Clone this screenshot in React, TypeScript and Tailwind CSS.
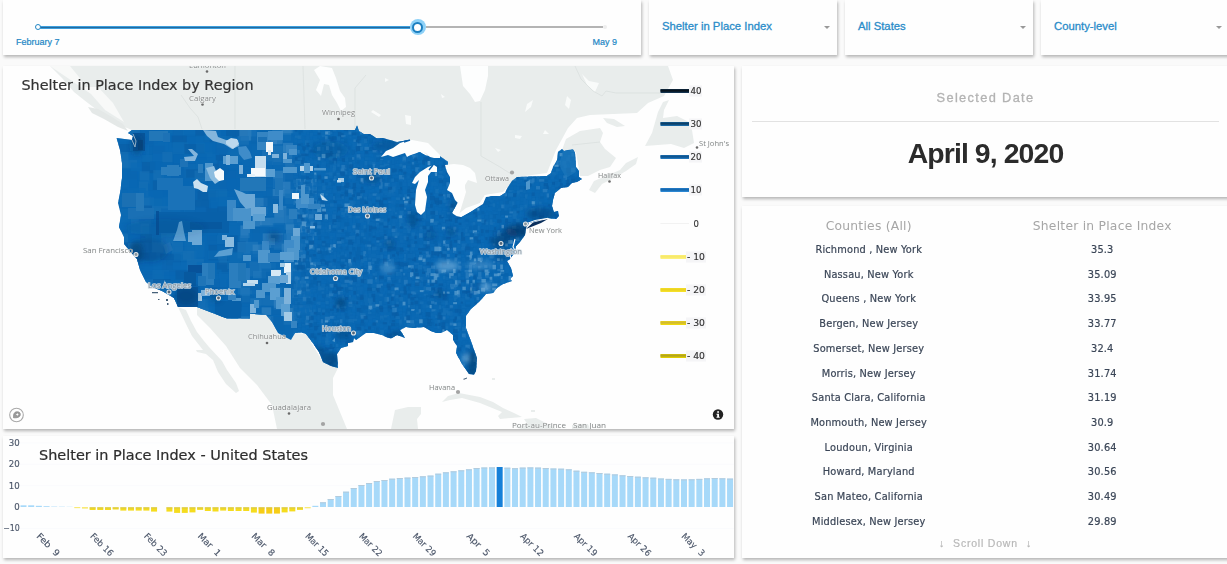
import React from "react";

const COUNTIES: [string, string][] = [
  ["Richmond , New York", "35.3"],
  ["Nassau, New York", "35.09"],
  ["Queens , New York", "33.95"],
  ["Bergen, New Jersey", "33.77"],
  ["Somerset, New Jersey", "32.4"],
  ["Morris, New Jersey", "31.74"],
  ["Santa Clara, California", "31.19"],
  ["Monmouth, New Jersey", "30.9"],
  ["Loudoun, Virginia", "30.64"],
  ["Howard, Maryland", "30.56"],
  ["San Mateo, California", "30.49"],
  ["Middlesex, New Jersey", "29.89"],
];

const US =
  "M132 130L355 130 357 125.5 359 131 364 134 370 134 376 138 383 138 390 140 397 142 408 140 408 156 420 152 425 155 432 157 438 155 444 159 448 162 448 166 445 168 450 172 453 181 448 190 454 188 458 202 452 213 456 216 459 215.5 461 217 470 212 483 203 485 197 492 196 500 196 505 193 508 187 512 181 517 177 547 176 551 173 553 167 557 160 558 152 562 149 564 151 568 150 573 149.5 575 153 576 167 579 171 579 177 582 179 577 182 572 183 568 187 561 188 555 193 553 200 552 206 554 212 558 211 559 216 556 219 548 218 543 219 529 223 526 228 525 235 520 242 516 246 515 252 510 259 507 261 511 268 513 276 510 279 512 281 503 284 497 288 493 293 486 294 480 301 471 309 466 316 466 328 472 344 477 358 476 371 474 374.5 469 374 462 364 456 353 457 346 453 340 453 335 447 330 441 333 436 333 431 331 424 327 413 328 406 327 400 330 402 333 405 338 397 335 391 338.5 386 337 382 335 374 333 366 333 356 340 354 338 353 342 348 343 348 346 341 348 337 354 338 368 331 366 323 362 319 352 312 342 306 334 301 332.5 295 333 291 340 283 336 278 333 272 322 266 315 250 313.5 250 318.5 227 318.5 197 307 178 307 174 298 162 291 152 287 146 282 140 270 137 259 129 250 124 244 124 237 119 227 121 215 118 203 120 193 122 178 122 163 120 150 116.5 138 132 140 133 136 128 133Z";

const CANADA =
  "M50 66L62 78 74 92 84 100 97 110 110 117 122 126 132 130 355 130 362 134 390 141 408 140 440 165 462 176 466 192 459 215 480 203 485 195 503 192 517 177 547 173 556 150 568 128 577 118 590 115 637 113 648 103 664 96 673 80 668 66Z";

type Patch = [number, number, number, number, string];

const PATCHES: Patch[] = [
  [133, 133, 12, 18, "#07559a"], [138, 140, 5, 10, "#084a86"],
  [149, 131, 19, 10, "#2277b8"], [163, 133, 7, 9, "#1d72b6"],
  [161, 167, 20, 8, "#2b7ebe"], [167, 165, 12, 11, "#2b7ebe"], [180, 159, 8, 8, "#1d72b6"],
  [157, 178, 26, 12, "#1a72b8"], [168, 186, 27, 24, "#1a72b8"],
  [122, 193, 16, 14, "#1b70b3"], [128, 208, 26, 11, "#1a70b5"], [136, 193, 8, 18, "#2679b9"],
  [157, 212, 72, 21, "#0860a9"], [156, 211, 3, 24, "#07529a"], [190, 222, 32, 7, "#07589f"],
  [257, 132, 11, 18, "#3584c2"], [268, 131, 15, 9, "#3f8cc9"], [258, 137, 9, 5, "#1a70b5"],
  [266, 142, 7, 10, "#f3f8fb"], [268, 150, 3, 5, "#d7e8f4"], [272, 154, 7, 4, "#7fb3db"],
  [286, 145, 11, 8, "#3584c2"], [289, 149, 8, 6, "#4b94cc"],
  [255, 156, 11, 21, "#c4ddef"], [251, 168, 14, 8, "#f4f9fc"], [247, 174, 8, 3, "#e4f0f8"],
  [266, 169, 9, 8, "#5b9fd2"], [223, 156, 15, 8, "#5b9fd2"], [226, 155, 4, 10, "#7fb3db"],
  [205, 163, 8, 18, "#4f97cd"], [198, 164, 5, 9, "#2b7ebe"],
  [239, 165, 4, 9, "#7db2db"], [227, 200, 9, 21, "#3a88c6"], [233, 208, 18, 13, "#4a93cb"],
  [243, 221, 12, 8, "#4f97cd"], [251, 207, 15, 9, "#6ca8d6"], [253, 214, 12, 7, "#5b9fd2"],
  [240, 178, 26, 13, "#2277b8"], [275, 178, 8, 17, "#1f75b8"], [279, 190, 4, 20, "#3a88c6"],
  [273, 204, 5, 9, "#8dbde0"], [283, 153, 4, 10, "#7fb3db"], [283, 159, 9, 4, "#4f97cd"],
  [283, 167, 14, 6, "#4f97cd"], [300, 166, 13, 5, "#b5d5ec"], [304, 163, 6, 10, "#4f97cd"],
  [314, 168, 12, 2.5, "#4f97cd"], [296, 198, 18, 10, "#3f8cc9"], [301, 194, 8, 10, "#4f97cd"],
  [292, 193, 7, 6, "#eef6fb"], [301, 185, 4, 10, "#4f97cd"], [289, 209, 8, 10, "#2b7ebe"],
  [308, 204, 12, 5, "#3584c2"], [315, 214, 7, 6, "#6ca8d6"], [338, 178, 6, 4, "#a4cbe6"],
  [337, 180, 4, 2.5, "#c5dff0"], [310, 226, 5, 2.5, "#8dbde0"],
  [188, 232, 12, 10, "#6ca8d6"], [192, 230, 10, 15, "#6ca8d6"],
  [225, 237, 9, 10, "#8dbde0"], [222, 235, 5, 5, "#7fb3db"],
  [293, 228, 7, 10, "#6ca8d6"], [291, 236, 9, 14, "#4f97cd"], [284, 240, 10, 22, "#3f8cc9"],
  [262, 241, 7, 10, "#3a88c6"], [269, 238, 6, 7, "#2b7ebe"],
  [202, 263, 12, 22, "#2b7ebe"], [208, 263, 7, 16, "#2277b8"], [198, 276, 8, 10, "#1f75b8"],
  [229, 263, 12, 25, "#2b7ebe"], [238, 263, 8, 18, "#2277b8"],
  [258, 250, 12, 13, "#4f97cd"], [268, 253, 12, 9, "#3584c2"],
  [243, 255, 8, 6, "#4f97cd"], [287, 248, 12, 12, "#4f97cd"], [280, 252, 14, 8, "#5b9fd2"],
  [247, 280, 11, 4, "#c5dff0"], [243, 283, 12, 3, "#b5d5ec"],
  [271, 270, 10, 6, "#d5e8f5"], [284, 263, 7, 10, "#e6f2fa"], [280, 263, 5, 4, "#a4cbe6"],
  [286, 272, 5, 12, "#b5d5ec"], [280, 275, 8, 8, "#6ca8d6"],
  [268, 276, 12, 8, "#5b9fd2"], [262, 283, 14, 9, "#4f97cd"], [256, 290, 9, 8, "#4f97cd"],
  [270, 288, 10, 12, "#5b9fd2"], [276, 297, 10, 12, "#4f97cd"], [284, 288, 7, 16, "#7fb3db"],
  [281, 304, 9, 12, "#5b9fd2"], [284, 312, 8, 9, "#a4cbe6"], [291, 321, 6, 7, "#3584c2"],
  [250, 304, 6, 9, "#7fb3db"], [254, 300, 5, 8, "#4f97cd"],
  [232, 298, 9, 9, "#4f97cd"], [228, 294, 8, 6, "#3584c2"],
  [198, 293, 4, 8, "#a4cbe6"], [201, 290, 9, 6, "#7db2db"],
  [188, 265, 14, 8, "#07529a"], [177, 287, 21, 20, "#07559a"], [184, 272, 12, 14, "#07599f"],
  [215, 301, 26, 17, "#0760a9"],
];

function makeRandom(seed: number) {
  let s = seed;
  return () => {
    s = (s * 1664525 + 1013904223) % 4294967296;
    return s / 4294967296;
  };
}

const WEST_SHADES = ["#0867b3", "#0a6ab6", "#0a66b0", "#095da6", "#0e6bb4", "#1770b6"];
const PLAINS_SHADES = ["#0a68b3", "#1a72b7", "#2178bb", "#0b65af", "#0b69b4", "#3584c2"];
const EAST_SHADES = ["#0863ac", "#0a68b3", "#0c69b4", "#0a6ab6", "#1670b7", "#085ca4", "#0e6bb4"];

function buildTexture(): Patch[] {
  const rand = makeRandom(41);
  const cells: Patch[] = [];
  for (let y = 124; y < 320; y += 9) {
    for (let x = 116; x < 296; x += 11) {
      const shades = x > 232 ? PLAINS_SHADES : WEST_SHADES;
      cells.push([x + rand() * 5, y + rand() * 4, 9 + rand() * 13, 7 + rand() * 10, shades[Math.floor(rand() * shades.length)]]);
    }
  }
  for (let y = 124; y < 378; y += 3.6) {
    for (let x = 293; x < 584; x += 3.9) {
      const r = rand();
      const appalachia = Math.hypot((x - 455) / 50, (y - 268) / 24) < 1;
      const plains = x < 335 && y < 300;
      let fill = EAST_SHADES[Math.floor(rand() * EAST_SHADES.length)];
      if (r < (appalachia ? 0.36 : plains ? 0.1 : 0.09)) fill = "#2b7dbf";
      if (r < (appalachia ? 0.14 : plains ? 0.03 : 0.02)) fill = "#5b9dcf";
      cells.push([x + rand() * 2, y + rand() * 2, 2 + rand() * 3.6, 2 + rand() * 3.4, fill]);
    }
  }
  return cells;
}

const TEXTURE = buildTexture();

type DarkSpot = [number, number, number, number, number];
const DARK: DarkSpot[] = [
  [520, 231, 15, 7, 0.6], [500, 242, 9, 6, 0.45], [508, 234, 10, 6, 0.3], [541, 214, 15, 6, 0.35],
  [455, 207, 5, 8, 0.3], [502, 256, 8, 4, 0.3], [136, 252, 7, 11, 0.4], [150, 250, 18, 12, 0.2],
  [186, 296, 12, 9, 0.3], [165, 228, 40, 9, 0.1], [473, 364, 6, 13, 0.5], [341, 303, 5, 5, 0.5],
  [331, 360, 9, 8, 0.45], [413, 219, 5, 8, 0.3], [137, 145, 6, 10, 0.3], [372, 178, 9, 5, 0.3],
  [392, 146, 20, 6, 0.2], [440, 294, 5, 4, 0.3], [343, 335, 8, 5, 0.3], [396, 335, 7, 4, 0.35],
  [216, 297, 6, 5, 0.25], [330, 150, 18, 9, 0.12], [274, 237, 6, 5, 0.35], [390, 244, 5, 4, 0.3],
  [451, 232, 4, 4, 0.3], [431, 235, 5, 4, 0.2], [320, 352, 5, 6, 0.35], [472, 290, 4, 3, 0.15],
];

type Place = [string, number, number, number, number, number, boolean];
// name, text x, baseline, width, dot x, dot y, over the data layer
const PLACES: Place[] = [
  ["Edmonton", 189, 68, 37, 207, 71.5, false],
  ["Calgary", 189, 100.8, 27, 202.5, 104.5, false],
  ["Winnipeg", 322, 115.2, 33, 338.5, 119, false],
  ["Ottawa", 485, 181, 24, 512, 172.5, false],
  ["Halifax", 598, 178, 23, 609.5, 181.5, false],
  ["St John's", 699, 145.7, 30, 697, 147.5, false],
  ["New York", 529, 232.7, 33, 525.5, 224, false],
  ["San Francisco", 83, 253, 50, 136, 254.5, false],
  ["Chihuahua", 248, 339, 38, 267, 343, false],
  ["Guadalajara", 267, 410, 44, 289, 413.5, false],
  ["Mexico City", 303, 435, 38, 323, 424, false],
  ["Havana", 429, 389.7, 26, 458, 392, false],
  ["Port-au-Prince", 512, 427.6, 54, 0, 0, false],
  ["San Juan", 573, 427.8, 33, 0, 0, false],
  ["Saint Paul", 353, 174, 37, 371.5, 178, true],
  ["Des Moines", 348, 212, 38, 367.5, 216, true],
  ["Oklahoma City", 310, 274.3, 52, 335.5, 278.5, true],
  ["Houston", 322, 330.8, 29, 353.5, 333, true],
  ["Los Angeles", 148, 288.3, 43, 169, 292, true],
  ["Phoenix", 205, 294.3, 29, 218.5, 298, true],
  ["Washington", 480, 253.8, 42, 501, 243.5, true],
];

const LEGEND: [string, number, string, string][] = [
  ["40", 91, "#07131d", "#143450"],
  ["30", 124, "#0c4069", "#1867a3"],
  ["20", 157, "#0f5590", "#2176bb"],
  ["10", 190, "#1568b0", "#2c87d2"],
  ["0", 223.5, "#f2f2f2", "#f7f7f7"],
  ["- 10", 257, "#f7e96b", "#fdf17c"],
  ["- 20", 290, "#ecd321", "#f5e02a"],
  ["- 30", 323, "#d2bb31", "#eed80f"],
  ["- 40", 356, "#b3a51d", "#e0cc00"],
];

function RegionMap() {
  return (
    <svg className="block h-full w-full" viewBox="3 66 731 363" fontFamily="'Open Sans', 'Noto Sans', sans-serif">
      <defs>
        <clipPath id="us-clip"><path d={US} /></clipPath>
        <filter id="soft" x="-50%" y="-50%" width="200%" height="200%"><feGaussianBlur stdDeviation="2.6" /></filter>
      </defs>
      <rect x="3" y="66" width="731" height="363" fill="#fefefe" />
      <g fill="#e9edec">
        <path d={CANADA} />
        <path d="M88 107L98 109 112 117 123 124 128 131 118 127 104 119 92 113Z" fill="#e4e8e7" />
        <path d="M562 150L566 139 580 131 600 128 603 133 600 142 605 149 616 158 610 167 600 170 588 176 580 176 576 152Z" />
        <path d="M638 157L636 164 626 171 616 177 602 184 595 193 589 190 594 181 606 176 620 170 626 163Z" />
        <path d="M603 118L614 119 625 126 617 127 607 123Z" />
        <path d="M669 100L664 110 663 118 677 116 689 122 692 130 694 143 684 148 671 144 645 146 652 133 658 112 663 102Z" />
        <path d="M197 307L227 318.5 250 318 250 313 267 315 278 333 291 340 295 333 306 334 323 362 338 368 333 378 333 395 340 412 347 429 277 429 272 405 257 385 240 368 226 346 210 328 197 315Z" />
        <path d="M178 307L186 310 191 321 197 332 204 341 209 347 222 361 227 370 236 383 239 391 236 393 226 384 218 372 213 360 206 354 197 352 196 350 203 350 192 336 186 324Z" />
        <path d="M442 402L448 396 459 393 480 397 493 402 503 408 514 413 522 417 500 419 498 416 502 412 480 403 462 398 450 400Z" />
        <path d="M391 429L395 410 408 407 421 407 421 414 417 419 418 429Z" />
        <path d="M524 419L536 418 548 424 556 429 522 429 514 427 528 425ZM572 425L588 424 590 429 572 429ZM492 378h3v2h-3zM531 410h4v2h-4z" />
      </g>
      <g fill="#fdfefe">
        <path d="M460 66H488L488 76 485 90 480 101 475 102 470 94 463 86Z" />
        <path d="M314 70L320 66 332 68 336 78 340 91 345 98 346 107 341 111 337 103 332 95 329 85 324 84 321 96 316 90 320 80Z" />
        <path d="M50 66H70L79 77 85 87 98 87 113 103 124 122 105 110 91 94 75 83Z" opacity=".7" />
        <path d="M405 115l6 1 0 9-5-1zM527 104l6-4-2 7-6 5zM567 96l4 4-2 9-4-4zM515 135l7 1-2 3-5-1zM373 110l8 5-2 2-8-5zM441 94l4 3-3 1zM385 78l4 2-4 2zM582 74l7 7 10 2-4 9-8-7zM545 130l4 4-6 0zM495 148l6 2-3 2z" opacity=".8" />
      </g>
      <g fill="none" stroke="#d8dedd" strokeWidth=".7">
        <path d="M181 95L190 108 198 117 202 129M235 66V129M303 66L305 129M355 130V88L366 75M481 102V156L500 167 511 174M575 66L581 79 593 91 602 96 606 91 616 93H660M572 145L600 142" />
      </g>

      <g clipPath="url(#us-clip)">
        <rect x="110" y="120" width="480" height="262" fill="#0967b2" />
        {TEXTURE.map(([x, y, w, h, fill], i) => (
          <rect key={i} x={x} y={y} width={w} height={h} fill={fill} opacity={x > 292 ? 0.75 : 0.65} />
        ))}
        {PATCHES.map(([x, y, w, h, fill], i) => (
          <rect key={i} x={x} y={y} width={w} height={h} fill={fill} />
        ))}
        <path d="M203 130L216 131 218 137 226 140 238 140 239 146 232 149 224 144 213 141 207 136Z" fill="#83b5dc" />
        <path d="M226 141L231 138 237 139 239 144 233 149 226 144Z" fill="#bcd8ed" />
        <path d="M188 149L192 149 198 154 195 161 185 161 184 157 194 156Z" fill="#83b5dc" />
        <path d="M193 182L197 179 201 183 208 186 207 192 203 192 198 189 194 188Z" fill="#cbe1f1" />
        <path d="M206 168L214 166 216 171 221 180 215 184 210 178Z" fill="#8dbde0" />
        <path d="M214 172L220 168 224 171 224 180 219 181 215 177Z" fill="#f6fafc" />
        <path d="M234 189L242 192 246 194 255 194 255 207 246 209 240 202Z" fill="#6ca8d6" />
        <path d="M177 230L179 222 182 221 184 232 186 241 173 241Z" fill="#5b9fd2" />
        <path d="M219 251L233 248 232 255 224 256 214 257Z" fill="#5b9fd2" />
        <path d="M320 194L324 197 328 201 322 200Z" fill="#c5dff0" />
        <path d="M238 147L246 146 250 152 252 158 244 160 239 154Z" fill="#3f8cc9" />
        <path d="M163 245L170 242 173 250 166 254Z" fill="#1d72b6" />
        <g fill="#0a2f5c" filter="url(#soft)">
          {DARK.map(([cx, cy, rx, ry, o], i) => (
            <ellipse key={i} cx={cx} cy={cy} rx={rx} ry={ry} opacity={o} />
          ))}
        </g>
        <g fill="#8fc0e4" filter="url(#soft)" opacity=".55">
          <ellipse cx="486" cy="287" rx="6" ry="4" />
          <ellipse cx="466" cy="358" rx="4" ry="5" />
          <ellipse cx="447" cy="266" rx="12" ry="5" />
          <ellipse cx="480" cy="265" rx="14" ry="4" opacity=".6" />
          <ellipse cx="388" cy="268" rx="7" ry="6" opacity=".6" />
        </g>
        <path d="M563 150L575 150 576 172 566 178 559 165Z" fill="#2079bd" opacity=".6" />
        <path d="M526 182l4-2 0 9-4 1zM332 341l3-3 0 4z" fill="#4f97cd" />
        <path d="M515 239L513 247 516 252M512 262L510 255" stroke="#fefefe" strokeWidth="1.1" fill="none" />
        <path d="M132 140L135 147 136 141 133 134" stroke="#9fb9cb" strokeWidth=".9" fill="none" />
      </g>
      <g fill="#fdfefe">
        <path d="M381 157L386 151 393 148 400 143 406 141 412 140 428 143 434 149 440 155 440 158 434 158 430 157 426 153 422 152 415 152 407 157 405 153 399 155 393 157 388 155Z" />
        <path d="M434 165L428 167 420 172 415 177 412 183 415 184 419 180 416 190 415 205 417 212 421 215 425 211 427 197 425 190 428 182 428 176 431 172 437 172 437 167Z" />
        <path d="M445 165L454 164 463 165 470 168 475 173 477 183 468 180 465 185 465 193 458 203 455 200 452 193 447 190 450 183 450 177 447 172Z" />
        <path d="M456 216L466 208 480 203 485 195 500 194 486 197 483 204 470 212 461 217Z" />
      </g>
      <path d="M404 142L410 140M429 170L433 165" stroke="#0a5fa8" strokeWidth="1.4" fill="none" />
      <path d="M526 229L533 222.5 541 220.5 548 219 541 223 531 227Z" fill="#0a2f5c" />
      <path d="M527 223.5L535 220.5 548 218.3" stroke="#fdfefe" strokeWidth="1" fill="none" />
      <path d="M152 292h6v1.2h-6zM166 299h2v2h-2zM167 303h1.5v2h-1.5zM158 299h1.5v1h-1.5zM463 379l4-1.5 0 1-3 1.3z" fill="#46617a" />

      {PLACES.map(([name, x, y, w, dx, dy, over]) => (
        <g key={name}>
          {dx > 0 && (over || name === "New York" || name === "San Francisco" ? (
            <circle cx={dx} cy={dy} r="2" fill={over ? "#50677c" : "#8a979f"} stroke="#e4e8ea" strokeWidth="1.1" />
          ) : (
            <circle cx={dx} cy={dy} r={["Ottawa", "Havana", "Mexico City"].includes(name) ? 2.1 : 1.3} fill={["Ottawa", "Havana", "Mexico City"].includes(name) ? "#a3a3a3" : "#6a6a6a"} />
          ))}
          <text
            x={x} y={y} textLength={w} lengthAdjust="spacingAndGlyphs" fontSize="7.8"
            fill={over ? "#8896a1" : "#858888"} stroke={over ? "#d5dfe6" : "#f7f9f9"}
            strokeWidth={over ? 1.7 : 0.7} paintOrder="stroke" strokeOpacity={over ? 0.9 : 0.8}
          >{name}</text>
        </g>
      ))}

      {LEGEND.map(([label, y, dark, light]) => {
        const negative = label.startsWith("-");
        return (
          <g key={label}>
            <rect x={negative ? 686 : 689} y={y - 5.5} width={negative ? 20 : label === "0" ? 10 : 13} height="11" fill="#f3f3f5" opacity={label === "0" ? 0 : 0.8} />
            <rect x="660.5" y={label === "0" ? y - 0.5 : y - 2} width={negative ? 25.5 : 28.5} height={label === "0" ? 1 : 4} fill={light} />
            <rect x="660.5" y={label === "0" ? y - 0.5 : y - 1.5} width={negative ? 25.5 : 28.5} height={label === "0" ? 1 : 2.2} fill={dark} />
            <text x={negative ? 687 : label === "0" ? 693.5 : 690.5} y={y + 3.2} fontSize="8.6" fill="#333" stroke="#333" strokeWidth=".15" fontFamily="'DejaVu Sans', Verdana, sans-serif" textLength={negative ? 18 : label === "0" ? 5.4 : 11} lengthAdjust="spacingAndGlyphs">{label}</text>
          </g>
        );
      })}

      <text x="21.5" y="90.3" fontSize="13.6" fill="#333" stroke="#333" strokeWidth=".2" fontFamily="'DejaVu Sans', Verdana, sans-serif" textLength="232" lengthAdjust="spacingAndGlyphs">Shelter in Place Index by Region</text>

      <g fill="none" stroke="#a9a9a9">
        <circle cx="16.5" cy="415" r="6.8" strokeWidth="1.1" fill="#fff" />
        <path d="M13.5 417.7c0-4 .7-5.9 4-5.9 1.8 0 2.8 1.1 2.8 2.6 0 2.4-2.6 3.8-6.8 3.3z" fill="#9b9b9b" stroke="#8d8d8d" strokeWidth=".8" />
        <path d="M17.3 412.9l.5 1.1 1.1.4-1.1.5-.5 1.1-.5-1.1-1.1-.5 1.1-.4z" fill="#fff" stroke="none" />
      </g>
      <circle cx="718" cy="414.5" r="5.2" fill="#222" />
      <path d="M717.2 411.2h1.8v1.6h-1.8zM716.5 413.7h2.5v3h.7v1.1h-3.2v-1.1h.7v-1.9h-.7z" fill="#fff" />
    </svg>
  );
}

// One bar per day from February 7 to May 9, in pixels above (+) or below (-) the zero line.
const BARS = [
  1.7, 1.7, 1.2, 0.8, 0.4, 0.3, 0.2, -0.7, -1, -2.6, -2.6, -2.6, -2.1, -3.2, -3.2, -3.2, -3.2, -4.2, 0, -4.2,
  -5.5, -5.5, -5, -2.5, -3.6, -4.1, -3.2, -3.6, -3.6, -3.6, -5.2, -6.2, -6.2, -6.2, -5, -4, -2.5, -0.8, 1.2,
  4.7, 8, 11, 15.3, 19, 22, 24, 26, 27, 28.3, 29, 29.4, 30, 30.7, 31.4, 33.3, 34.7, 35.7, 36.7, 37.7, 39,
  39.5, 39.6, 40, 39.3, 38.8, 39.4, 39.6, 39.4, 39, 38.5, 38.3, 37.7, 36.3, 35.2, 34.7, 34, 33.3, 32.6, 31.7,
  31, 30.3, 29.7, 29.3, 28.5, 28.1, 27.7, 27.6, 27.7, 28.1, 28.7, 29, 28.7, 28.4,
];

const WEEKS = ["Feb  9", "Feb 16", "Feb 23", "Mar  1", "Mar  8", "Mar 15", "Mar 22", "Mar 29", "Apr  5", "Apr 12", "Apr 19", "Apr 26", "May  3"];

function TrendChart() {
  return (
    <svg className="block h-full w-full overflow-visible" viewBox="3 436 731 122" fontFamily="'DejaVu Sans', Verdana, sans-serif">
      {[443, 464.3, 485.7, 528.4].map((y) => (
        <path key={y} d={`M20 ${y}H734`} stroke="#fafbfd" />
      ))}
      {BARS.map((v, i) => {
        const x = 20.5 + i * 7.68;
        const fill = i === 62 ? "#1680d8" : v > 0 ? "#a7d9f9" : v < -5.8 ? "#f7cd16" : "#f5dc1e";
        return (
          <g key={i}>
            <rect x={x} y={v > 0 ? 507 - v : 507.4} width="6" height={Math.abs(v)} fill={fill} />
            {v > 4 && i !== 62 && <rect x={x} y={507 - v} width="6" height="1" fill="#b3cbdc" />}
            {v < -2 && <rect x={x} y="507.4" width="6" height="1" fill="#d5c54c" />}
          </g>
        );
      })}
      <g fontSize="8.6" fill="#4a5568" textAnchor="end">
        {[["30", 443], ["20", 464.3], ["10", 485.7], ["0", 507.2], ["−10", 528.4]].map(([t, y]) => (
          <text key={t} x="19.8" y={Number(y) + 3} stroke="#4a5568" strokeWidth=".15" textLength={t === "−10" ? 16.6 : undefined} lengthAdjust="spacingAndGlyphs">{t}</text>
        ))}
      </g>
      <g fontSize="8.8" fill="#4a5568" stroke="#4a5568" strokeWidth=".12">
        {WEEKS.map((w, i) => (
          <text key={w} className="whitespace-pre" transform={`translate(${36 + i * 53.76} 536.7) rotate(45)`} textLength="28.5" lengthAdjust="spacingAndGlyphs">{w}</text>
        ))}
      </g>
      <text x="39" y="459.5" fontSize="13.6" fill="#2d2d2d" stroke="#2d2d2d" strokeWidth=".2" textLength="269" lengthAdjust="spacingAndGlyphs">Shelter in Place Index - United States</text>
    </svg>
  );
}

const CARD = "bg-[#fefefe] shadow-[1px_2px_3px_rgba(0,0,0,0.28)]";

function Select({ label, last }: { label: string; last?: boolean }) {
  return (
    <div className={`${CARD} flex h-[55px] ${last ? "w-[195px] pr-[14px]" : "w-[188.5px] pr-[7.5px]"} shrink-0 items-center justify-between pl-[13.5px]`}>
      <span className="-mt-[3px] text-[11.3px] text-[#2a8cc9] [-webkit-text-stroke:0.3px_#2a8cc9]">{label}</span>
      <span className="border-x-[3px] border-t-[3.5px] border-x-transparent border-t-[#999]" />
    </div>
  );
}

function DateSlider() {
  return (
    <div className={`${CARD} h-[55px] w-[638px] shrink-0 pt-[21px] pr-6 pl-3.5 text-[#2387c5]`}>
      <div className="flex h-3 items-center pl-[17.5px] pr-[9px]">
        <span className="z-10 h-[6px] w-[6px] shrink-0 rounded-full border-[1.5px] border-[#2387c5] bg-white" />
        <span className="-ml-px h-[3px] w-[370px] shrink-0 border-y border-[#3c9fdd] bg-[#27699c]" />
        <span className="z-10 flex h-4 w-4 shrink-0 items-center justify-center rounded-full bg-[#8ed1f7]">
          <span className="h-[11px] w-[11px] rounded-full border-[2.5px] border-[#1c7fc0] bg-white" />
        </span>
        <span className="h-[2px] w-[177px] shrink-0 bg-[#b4b4b4]" />
        <span className="h-1 w-1 shrink-0 rounded-full bg-[#eeeeee]" />
      </div>
      <div className="mt-[3px] flex justify-between text-[9px] leading-3 [-webkit-text-stroke:0.2px_#2387c5]">
        <span className="-ml-px">February 7</span>
        <span>May 9</span>
      </div>
    </div>
  );
}

export default function App() {
  return (
    <main className="h-[564px] w-[1227px] overflow-hidden bg-[#fafafa] pl-[3px] font-['Liberation_Sans',Arial,sans-serif]">
      <header className="flex gap-[7.5px]">
        <DateSlider />
        <Select label="Shelter in Place Index" />
        <Select label="All States" />
        <Select label="County-level" last />
      </header>
      <div className="mt-[11px] flex gap-2">
        <div className="flex w-[731px] shrink-0 flex-col gap-[7px]">
          <section className={`${CARD} h-[363px]`}><RegionMap /></section>
          <section className={`${CARD} h-[122px]`}><TrendChart /></section>
        </div>
        <div className="flex w-[487px] shrink-0 flex-col gap-[9px]">
          <section className={`${CARD} h-[131px] px-2.5 text-center`}>
            <div className="flex h-[55.5px] items-end justify-center border-b border-[#e2e2e2] pb-[15px]">
              <h2 className="text-[12.8px] leading-4 tracking-[1.35px] text-[#b3b3b3] [-webkit-text-stroke:0.3px_#b3b3b3]">Selected Date</h2>
            </div>
            <p className="mt-[15px] text-[28.4px] leading-8 font-bold tracking-[-0.9px] text-[#2b2b2b]">April 9, 2020</p>
          </section>
          <section className={`${CARD} h-[352px] px-2.5 pt-[10px] text-center font-['DejaVu_Sans',Verdana,sans-serif]`}>
            <div className="mb-[2px] grid grid-cols-2 text-[12.3px] leading-[20px] tracking-[0.25px] text-[#a6a6a6]">
              <span>Counties (All)</span>
              <span>Shelter in Place Index</span>
            </div>
            {COUNTIES.map(([county, value]) => (
              <div key={county} className="grid h-[24.73px] grid-cols-2 items-center text-[9.8px] tracking-[0.18px] text-[#3b4657] [-webkit-text-stroke:0.2px_#3b4657]">
                <span>{county}</span>
                <span>{value}</span>
              </div>
            ))}
            <div className="flex justify-center gap-2 font-['Liberation_Sans',Arial,sans-serif] text-[10.5px] leading-4 tracking-[0.8px] text-[#b8b8b8] [-webkit-text-stroke:0.2px_#b8b8b8]">
              <span>↓</span><span>Scroll Down</span><span>↓</span>
            </div>
          </section>
        </div>
      </div>
    </main>
  );
}
